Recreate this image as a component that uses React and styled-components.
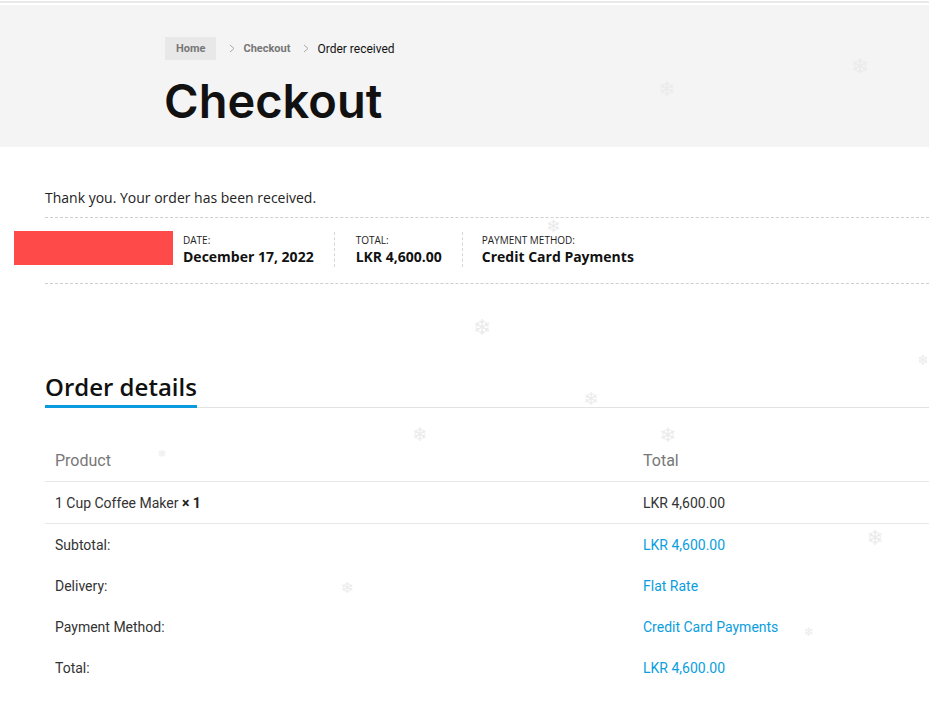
import React from 'react';
import styled, {createGlobalStyle} from 'styled-components';

const Global = createGlobalStyle`
    html, body {
        margin: 0;
        padding: 0;
        background: #ffffff;
        overflow: hidden;
    }
    body {
        font-family: "Open Sans", "Liberation Sans", sans-serif;
        color: #222;
    }
`

const Page = styled.div`
    position: relative;
    width: 929px;
    min-height: 724px;
    overflow: hidden;
`
const TopLine = styled.div`
    margin-top: 1px;
    height: 2px;
    background: #e9e9e9;
    margin-bottom: 2px;
`
const Banner = styled.header`
    height: 142px;
    background: #f4f4f4;
    padding: 32px 0 0 165px;
    box-sizing: border-box;
`
const Crumbs = styled.nav`
    display: flex;
    align-items: center;
    height: 23px;
    font-family: Roboto, "Liberation Sans", sans-serif;
    font-size: 11px;
`
const Crumb = styled.span`
    display: flex;
    align-items: center;
    height: 23px;
    padding: ${p => p.pill ? '0 11px' : '0'};
    background: ${p => p.pill ? '#e8e8e8' : 'transparent'};
    color: ${p => p.current ? '#111' : '#777'};
    font-weight: ${p => p.current ? 400 : 700};
    font-size: ${p => p.current ? '12px' : '11px'};
`
const Sep = styled.svg`
    width: 6px;
    height: 9px;
    margin: 0 8px 0 13px;
`
const Title = styled.h1`
    margin: 13px 0 0 -1px;
    font-family: Inter, "Liberation Sans", sans-serif;
    font-weight: 600;
    font-size: 47px;
    line-height: 56px;
    color: #111;
`
const Content = styled.main`
    padding: 41px 0 0 45px;
`
const Thanks = styled.p`
    margin: 0 0 9px;
    font-size: 14px;
    line-height: 20px;
    color: #222;
`
const Overview = styled.ul`
    display: flex;
    align-items: center;
    margin: 0;
    padding: 14px 0 16px;
    list-style: none;
    border-top: 1px dashed #cfcfcf;
    border-bottom: 1px dashed #cfcfcf;
`
const Redacted = styled.li`
    width: 159px;
    height: 34px;
    margin: -3px 10px 0 -31px;
    background: #ff4a4a;
`
const OverItem = styled.li`
    display: flex;
    flex-direction: column;
    padding: 2px 20px 0 ${p => p.first ? '0' : p.last ? '19px' : '21px'};
    border-right: ${p => p.last ? 'none' : '1px dashed #d5d5d5'};
    height: 33px;
    > span {
        font-size: 10px;
        line-height: 13px;
        text-transform: uppercase;
        color: #222;
    }
    > strong {
        font-size: 14px;
        line-height: 20px;
        font-weight: 700;
        color: #111;
    }
`
const Section = styled.section`
    margin-top: 86px;
`
const SectionHead = styled.div`
    border-bottom: 1px solid #e2e2e2;
    > h2 {
        display: inline-block;
        margin: 0 0 -1px;
        padding-bottom: 2px;
        font-size: 24px;
        line-height: 33px;
        font-weight: 600;
        color: #111;
        border-bottom: 3px solid #0a9ade;
    }
`
const Table = styled.table`
    width: 884px;
    margin-top: 31px;
    border-collapse: collapse;
    font-family: Roboto, "Liberation Sans", sans-serif;
    font-size: 14px;
    color: #333;
    th, td {
        padding: 0 10px;
        text-align: left;
        height: 41px;
    }
    th {
        font-weight: 400;
        font-size: 16px;
        color: #777;
        height: 42px;
        border-bottom: 1px solid #e8e8e8;
    }
    th:first-child, td:first-child {
        width: 568px;
    }
    tbody tr td {
        border-bottom: 1px solid #e8e8e8;
    }
`
const Qty = styled.strong`
    font-weight: 700;
    color: #222;
`
const Link = styled.span`
    color: #0a9ede;
`
const Snow = styled.div`
    position: absolute;
    inset: 0;
    pointer-events: none;
`
const Flake = styled.span`
    position: absolute;
    font-family: "DejaVu Sans", sans-serif;
    color: #ebebeb;
    line-height: 1;
    transform: translate(-50%, -50%);
`

const flakes = [
    {x: 860, y: 67, s: 22},
    {x: 667, y: 89, s: 20},
    {x: 553, y: 226, s: 17},
    {x: 482, y: 328, s: 22},
    {x: 923, y: 360, s: 14},
    {x: 591, y: 399, s: 18},
    {x: 420, y: 434, s: 19},
    {x: 668, y: 435, s: 20},
    {x: 162, y: 454, s: 10},
    {x: 875, y: 538, s: 21},
    {x: 347, y: 588, s: 15},
    {x: 809, y: 632, s: 12},
]

const Chevron = () => (
    <Sep viewBox="0 0 6 9">
        <polyline points="1,1 5,4.5 1,8" fill="none" stroke="#aaa" strokeWidth="1" />
    </Sep>
)

const rows = [
    ['Subtotal:', 'LKR 4,600.00'],
    ['Delivery:', 'Flat Rate'],
    ['Payment Method:', 'Credit Card Payments'],
    ['Total:', 'LKR 4,600.00'],
]

export default function App() {
    return (
        <Page>
            <Global/>
            <TopLine/>
            <Banner>
                <Crumbs>
                    <Crumb pill>Home</Crumb>
                    <Chevron/>
                    <Crumb>Checkout</Crumb>
                    <Chevron/>
                    <Crumb current>Order received</Crumb>
                </Crumbs>
                <Title>Checkout</Title>
            </Banner>
            <Content>
                <Thanks>Thank you. Your order has been received.</Thanks>
                <Overview>
                    <Redacted/>
                    <OverItem first>
                        <span>Date:</span>
                        <strong>December 17, 2022</strong>
                    </OverItem>
                    <OverItem>
                        <span>Total:</span>
                        <strong>LKR 4,600.00</strong>
                    </OverItem>
                    <OverItem last>
                        <span>Payment method:</span>
                        <strong>Credit Card Payments</strong>
                    </OverItem>
                </Overview>
                <Section>
                    <SectionHead><h2>Order details</h2></SectionHead>
                    <Table>
                        <thead>
                            <tr><th>Product</th><th>Total</th></tr>
                        </thead>
                        <tbody>
                            <tr>
                                <td>1 Cup Coffee Maker <Qty>× 1</Qty></td>
                                <td>LKR 4,600.00</td>
                            </tr>
                        </tbody>
                        <tfoot>
                            {rows.map(([label, value]) => (
                                <tr key={label}>
                                    <td>{label}</td>
                                    <td><Link>{value}</Link></td>
                                </tr>
                            ))}
                        </tfoot>
                    </Table>
                </Section>
            </Content>
            <Snow>
                {flakes.map((f, i) => (
                    <Flake key={i} style={{left: f.x, top: f.y, fontSize: f.s}}>❄</Flake>
                ))}
            </Snow>
        </Page>
    )
}
